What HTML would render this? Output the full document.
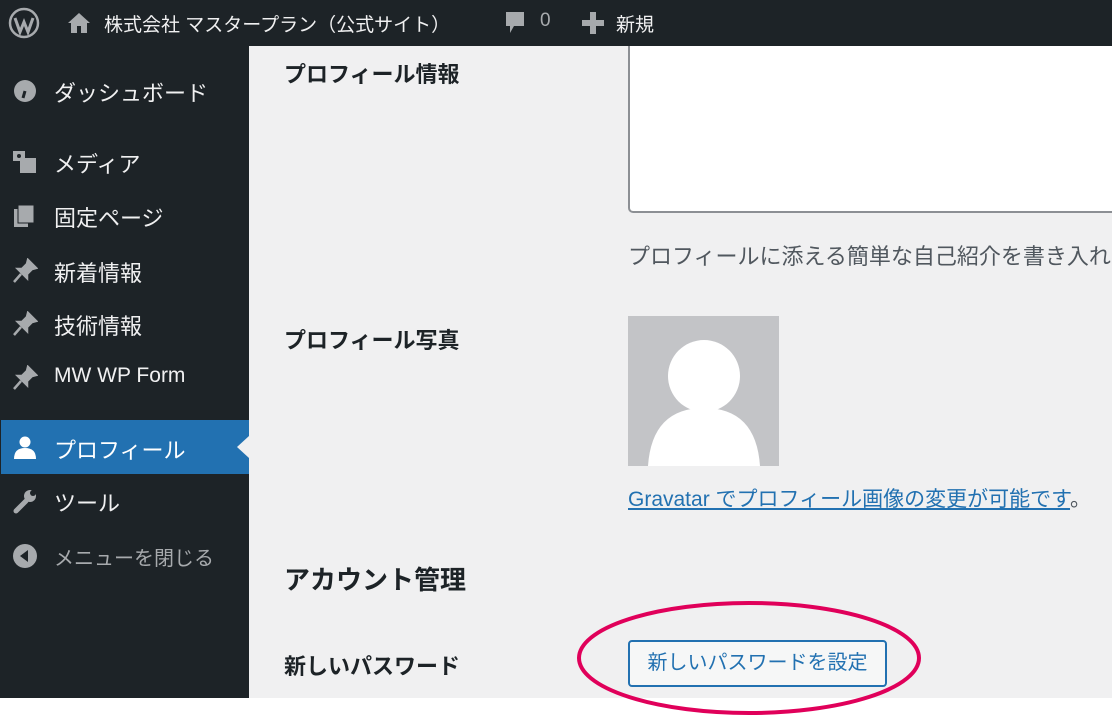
<!DOCTYPE html>
<html><head><meta charset="utf-8"><style>
*{margin:0;padding:0;box-sizing:border-box}
body{width:1112px;height:718px;overflow:hidden;background:#fff;font-family:"Liberation Sans","Noto Sans CJK JP",sans-serif;position:relative}
.top{position:absolute;left:0;top:0;width:1112px;height:46px;background:#1d2327;color:#f0f0f1;font-size:19px}
.top span{position:absolute;top:10px}
.side{position:absolute;left:0;top:46px;width:249px;height:652px;background:#1d2327}
.main{position:absolute;left:249px;top:46px;width:863px;height:652px;background:#f0f0f1}
.mi{position:absolute;left:54px;color:#f0f0f1;font-size:22px}
.ic{position:absolute;left:12px;width:26px;height:26px}
.lbl{position:absolute;left:284px;font-size:22px;color:#1d2327;font-weight:bold}
</style></head><body>
<div class="top">
<svg style="position:absolute;left:8px;top:7px" width="32" height="32" viewBox="0 0 32 32"><circle cx="16" cy="16" r="14" fill="none" stroke="#a7aaad" stroke-width="2.5"/><path d="M7 11 L12 25 L16 15 L20 25 L25 11" fill="none" stroke="#a7aaad" stroke-width="3"/></svg>
<svg style="position:absolute;left:67px;top:12px" width="24" height="22" viewBox="0 0 24 22"><path d="M12 1 L1 11 H4 V21 H10 V14 H14 V21 H20 V11 H23 Z" fill="#a7aaad"/></svg>
<span style="left:104px">株式会社 マスタープラン（公式サイト）</span>
<svg style="position:absolute;left:504px;top:11px" width="22" height="24" viewBox="0 0 22 24"><path d="M2 1 H20 V15 H10 L6 22 V15 H2 Z" fill="#a7aaad"/></svg>
<span style="left:540px;color:#a7aaad">0</span>
<svg style="position:absolute;left:582px;top:12px" width="22" height="22"><rect x="8" y="0" width="6" height="22" fill="#a7aaad"/><rect x="0" y="8" width="22" height="6" fill="#a7aaad"/></svg>
<span style="left:616px">新規</span>
</div>
<div class="side">
<svg class="ic" style="top:32px" viewBox="0 0 26 26"><circle cx="13" cy="13" r="11" fill="#a7aaad"/><path d="M13 13 L11 20" stroke="#1d2327" stroke-width="3"/></svg>
<div class="mi" style="top:30px">ダッシュボード</div>
<svg class="ic" style="top:103px" viewBox="0 0 26 26"><rect x="1" y="2" width="12" height="10" fill="#a7aaad"/><rect x="8" y="9" width="16" height="15" fill="#a7aaad"/><circle cx="7" cy="7" r="2" fill="#1d2327"/></svg>
<div class="mi" style="top:101px">メディア</div>
<svg class="ic" style="top:157px" viewBox="0 0 26 26"><rect x="2" y="6" width="14" height="18" fill="#a7aaad"/><rect x="6" y="2" width="16" height="18" fill="#a7aaad" stroke="#1d2327"/></svg>
<div class="mi" style="top:155px">固定ページ</div>
<svg class="ic" style="top:212px" viewBox="0 0 26 26"><path d="M16 2 L24 10 L20 11 L15 16 L15 20 L6 11 L10 11 L15 6 Z M9 16 L2 24" fill="#a7aaad" stroke="#a7aaad" stroke-width="2.5"/></svg>
<div class="mi" style="top:210px">新着情報</div>
<svg class="ic" style="top:265px" viewBox="0 0 26 26"><path d="M16 2 L24 10 L20 11 L15 16 L15 20 L6 11 L10 11 L15 6 Z M9 16 L2 24" fill="#a7aaad" stroke="#a7aaad" stroke-width="2.5"/></svg>
<div class="mi" style="top:263px">技術情報</div>
<svg class="ic" style="top:319px" viewBox="0 0 26 26"><path d="M16 2 L24 10 L20 11 L15 16 L15 20 L6 11 L10 11 L15 6 Z M9 16 L2 24" fill="#a7aaad" stroke="#a7aaad" stroke-width="2.5"/></svg>
<div class="mi" style="top:318px;font-size:21px">MW WP Form</div>
<div style="position:absolute;left:1px;top:374px;width:248px;height:54px;background:#2271b1"></div>
<div style="position:absolute;left:237px;top:390px;width:0;height:0;border-top:11px solid transparent;border-bottom:11px solid transparent;border-right:12px solid #f0f0f1"></div>
<svg class="ic" style="top:389px" viewBox="0 0 26 26"><circle cx="13" cy="7" r="5.5" fill="#fff"/><path d="M2 24 Q2 13 13 13 Q24 13 24 24 Z" fill="#fff"/></svg>
<div class="mi" style="top:387px;color:#fff">プロフィール</div>
<svg class="ic" style="top:442px" viewBox="0 0 26 26"><path d="M4 23 L14 13" stroke="#a7aaad" stroke-width="5" stroke-linecap="round"/><circle cx="18" cy="8" r="6" fill="#a7aaad"/><circle cx="21" cy="5" r="3" fill="#1d2327"/></svg>
<div class="mi" style="top:440px">ツール</div>
<svg class="ic" style="top:497px" viewBox="0 0 26 26"><circle cx="13" cy="13" r="12" fill="#a7aaad"/><path d="M16 7 L8 13 L16 19 Z" fill="#1d2327"/></svg>
<div class="mi" style="top:496px;color:#a7aaad;font-size:20px">メニューを閉じる</div>
</div>
<div class="main"></div>
<div class="lbl" style="top:57px">プロフィール情報</div>
<div style="position:absolute;left:628px;top:46px;width:500px;height:167px;background:#fff;border:2px solid #8c8f94;border-top:none;border-radius:0 0 0 5px"></div>
<div style="position:absolute;left:628px;top:239px;font-size:22px;color:#50575e;white-space:nowrap">プロフィールに添える簡単な自己紹介を書き入れ</div>
<div class="lbl" style="top:323px">プロフィール写真</div>
<svg style="position:absolute;left:628px;top:316px" width="151" height="150" viewBox="0 0 151 150"><rect width="151" height="150" fill="#c3c4c7"/><circle cx="76" cy="60" r="36" fill="#fff"/><path d="M20 150 Q24 92 76 92 Q128 92 132 150 Z" fill="#fff"/></svg>
<div style="position:absolute;left:628px;top:483px;font-size:21px;color:#2271b1;white-space:nowrap"><span style="text-decoration:underline">Gravatar でプロフィール画像の変更が可能です</span><span style="color:#50575e">。</span></div>
<div style="position:absolute;left:284px;top:560px;font-size:26px;color:#1d2327;font-weight:bold">アカウント管理</div>
<div class="lbl" style="top:649px">新しいパスワード</div>
<div style="position:absolute;left:628px;top:640px;width:259px;height:47px;background:#f6f7f7;border:2px solid #2271b1;border-radius:4px;color:#2271b1;font-size:20px;text-align:center;line-height:43px;white-space:nowrap">新しいパスワードを設定</div>
<svg style="position:absolute;left:575px;top:600px" width="350" height="118"><ellipse cx="174" cy="58" rx="170" ry="55" fill="none" stroke="#e0005a" stroke-width="4"/></svg>
</body></html>
